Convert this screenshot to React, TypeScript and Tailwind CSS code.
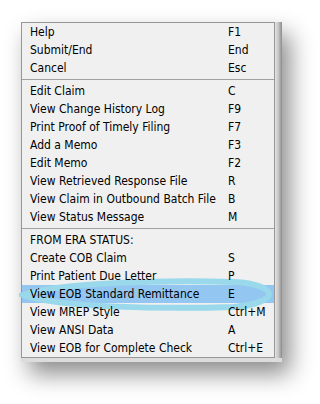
import React from 'react';

type Item = { label: string; key: string; hot?: boolean };

const groups: Item[][] = [
  [
    { label: 'Help', key: 'F1' },
    { label: 'Submit/End', key: 'End' },
    { label: 'Cancel', key: 'Esc' },
  ],
  [
    { label: 'Edit Claim', key: 'C' },
    { label: 'View Change History Log', key: 'F9' },
    { label: 'Print Proof of Timely Filing', key: 'F7' },
    { label: 'Add a Memo', key: 'F3' },
    { label: 'Edit Memo', key: 'F2' },
    { label: 'View Retrieved Response File', key: 'R' },
    { label: 'View Claim in Outbound Batch File', key: 'B' },
    { label: 'View Status Message', key: 'M' },
  ],
  [
    { label: 'FROM ERA STATUS:', key: '' },
    { label: 'Create COB Claim', key: 'S' },
    { label: 'Print Patient Due Letter', key: 'P' },
    { label: 'View EOB Standard Remittance', key: 'E', hot: true },
    { label: 'View MREP Style', key: 'Ctrl+M' },
    { label: 'View ANSI Data', key: 'A' },
    { label: 'View EOB for Complete Check', key: 'Ctrl+E' },
  ],
];

function Row({ item }: { item: Item }) {
  return (
    <div className={`relative flex h-[18px] items-center ${item.hot ? 'bg-[#93c6f0]' : ''}`}>
      {item.hot && (
        // hand-drawn highlight ring
        <svg className="absolute left-[-3px] top-[-7px] z-0" width="254" height="33" viewBox="0 0 254 33">
          <path
            d="M4 17 C 40 4, 150 2, 215 4 C 238 5, 250 11, 250 16 C 250 21, 238 27, 215 29 C 150 31, 40 30, 4 17 Z"
            fill="none"
            stroke="#9ad8ec"
            strokeWidth="6"
          />
        </svg>
      )}
      <span className="relative z-10 w-[206px] pl-[8px]">{item.label}</span>
      <span className="relative z-10">{item.key}</span>
    </div>
  );
}

export default function App() {
  return (
    <div className="h-[404px] w-[320px] bg-white pl-[21px] pt-[22px]">
      <div className="flex w-[261px] flex-col shadow-[8px_12px_22px_rgba(0,0,0,0.45)]">
        <div className="flex">
          <div
            className="w-[254px] border border-[#979797] bg-[#f0f0f0] text-[12px] text-black"
            style={{ fontFamily: 'Tahoma, "DejaVu Sans Condensed", "Liberation Sans", sans-serif' }}
          >
            {groups.map((g, i) => (
              <div key={i}>
                {i > 0 && (
                  <div className="flex h-[5px] items-center">
                    <div className="h-px w-full bg-[#a0a0a0]" />
                  </div>
                )}
                {g.map(item => (
                  <Row key={item.label} item={item} />
                ))}
              </div>
            ))}
          </div>
          <div className="w-[7px] bg-gradient-to-r from-[#e4e4e4] via-[#c4c4c4] to-[#8c8c8c]" />
        </div>
        <div className="h-[4px] w-full bg-[#dcdcdc]" />
      </div>
    </div>
  );
}
